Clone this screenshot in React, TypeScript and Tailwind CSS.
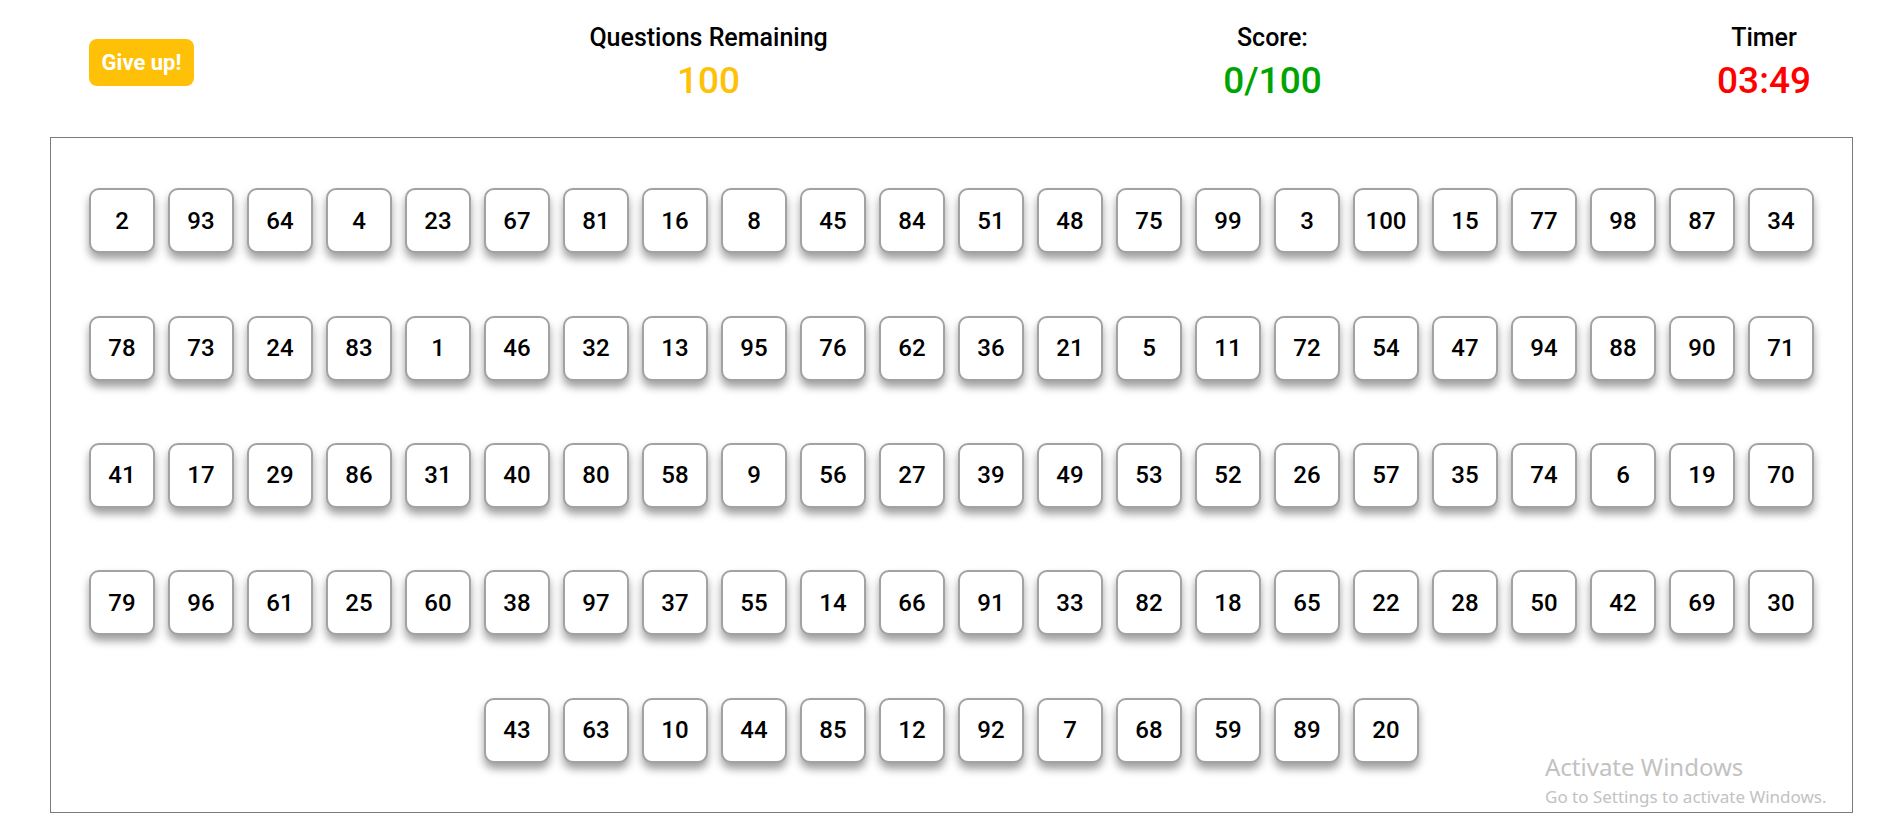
import React from "react";

const rows: number[] = [
  2, 93, 64, 4, 23, 67, 81, 16, 8, 45, 84, 51, 48, 75, 99, 3, 100, 15, 77, 98, 87, 34,
  78, 73, 24, 83, 1, 46, 32, 13, 95, 76, 62, 36, 21, 5, 11, 72, 54, 47, 94, 88, 90, 71,
  41, 17, 29, 86, 31, 40, 80, 58, 9, 56, 27, 39, 49, 53, 52, 26, 57, 35, 74, 6, 19, 70,
  79, 96, 61, 25, 60, 38, 97, 37, 55, 14, 66, 91, 33, 82, 18, 65, 22, 28, 50, 42, 69, 30,
  43, 63, 10, 44, 85, 12, 92, 7, 68, 59, 89, 20,
];

function Stat({ title, value, color }: { title: string; value: string; color: string }) {
  return (
    <div className="flex flex-col items-center">
      <div className="text-[25px] leading-[28px] font-medium text-black">{title}</div>
      <div className={`mt-[9px] text-[37px] leading-[40px] font-medium ${color}`}>{value}</div>
    </div>
  );
}

export default function App() {
  return (
    <div className="relative w-full h-[840px] bg-white font-['Roboto',sans-serif] overflow-hidden">
      <header className="flex items-center justify-between pt-[24px] pl-[89px] pr-[82px]">
        <button className="h-[47px] w-[105px] rounded-[8px] bg-[#FFC107] text-white text-[22px] font-bold leading-none">
          Give up!
        </button>
        <Stat title="Questions Remaining" value="100" color="text-[#FFC107]" />
        <Stat title="Score:" value="0/100" color="text-[#00A400]" />
        <Stat title="Timer" value="03:49" color="text-[#FF0000]" />
      </header>

      <div className="mt-[36px] ml-[50px] w-[1803px] border border-[#7a7a7a] pt-[19px] pb-[18px]">
        <div className="flex flex-wrap justify-center">
          {rows.map((n) => (
            <div
              key={n}
              className="mx-[6.5px] my-[31.2px] flex h-[65px] w-[66px] items-center justify-center rounded-[10px] border-2 border-[#a3a1a2] bg-white text-[24px] font-medium text-black shadow-[0_6px_9px_rgba(0,0,0,0.38)]"
            >
              {n}
            </div>
          ))}
        </div>
      </div>

      <div className="absolute left-[1545px] top-[751px] font-['Noto_Sans',sans-serif] text-[#c2c2c2] pointer-events-none">
        <div className="text-[24px] leading-[32px]">Activate Windows</div>
        <div className="text-[17px] leading-[22px] mt-[3px]">Go to Settings to activate Windows.</div>
      </div>
    </div>
  );
}
